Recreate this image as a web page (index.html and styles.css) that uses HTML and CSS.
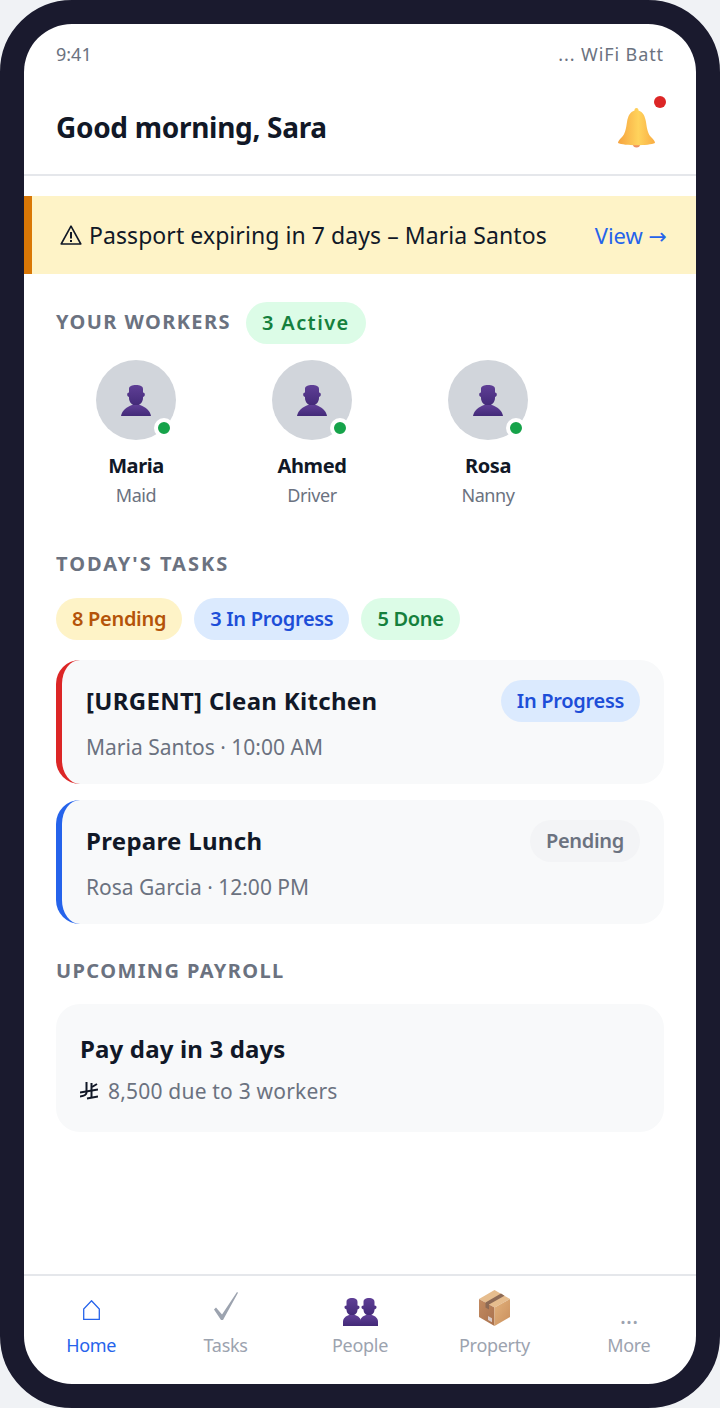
FILE: index.html
```html
<!DOCTYPE html>
<html lang="en">
<head>
    <meta charset="UTF-8">
    <meta name="viewport" content="width=device-width, initial-scale=1.0">
    <title>Home</title>
    <link rel="stylesheet" href="styles.css">
</head>
<body>
    <!-- shared person shapes and gradients for the avatars and the People tab -->
    <svg class="svg-defs" width="0" height="0" aria-hidden="true">
        <defs>
            <linearGradient id="personFill" x1="0" y1="0" x2="0" y2="1">
                <stop offset="0" stop-color="#5f3f96"/>
                <stop offset="1" stop-color="#432a78"/>
            </linearGradient>
            <linearGradient id="bellFill" x1="0" y1="0" x2="1" y2="0">
                <stop offset="0" stop-color="#f6a33f"/>
                <stop offset="0.55" stop-color="#ffd35c"/>
                <stop offset="1" stop-color="#f9ad43"/>
            </linearGradient>
            <linearGradient id="boxRight" x1="0" y1="0" x2="1" y2="1">
                <stop offset="0" stop-color="#e3b27c"/>
                <stop offset="1" stop-color="#c98f5d"/>
            </linearGradient>
            <linearGradient id="boxLeft" x1="0" y1="0" x2="1" y2="1">
                <stop offset="0" stop-color="#c28a60"/>
                <stop offset="1" stop-color="#a9714d"/>
            </linearGradient>
            <symbol id="person" viewBox="0 0 30 31">
                <path fill="url(#personFill)" d="M8 4C8 1 11 0 15 0s7 1 7 4v3.500c1.500 0 1.800 1 1.800 2s-.3 2-1.800 2.500v1c0 4-3 7.500-7 7.500s-7-3.500-7-7.500v-1c-1.500-.5-1.800-1.500-1.800-2.500s.3-2 1.800-2z"/>
                <path fill="url(#personFill)" d="M0 31c1-6 6-9 11-11h8c5 2 10 5 11 11z"/>
            </symbol>
            <symbol id="personTall" viewBox="0 0 18 28">
                <path fill="url(#personFill)" d="M3.500 4C3.500 1 6 0 9 0s5.500 1 5.500 4v3.500c1.500 0 2 .8 2 1.800s-.5 1.800-2 2.200c0 3.500-2.500 6-5.500 6s-5.500-2.500-5.500-6C2 11.100 1.500 10.300 1.500 9.300S2 7.500 3.500 7.500z"/>
                <path fill="url(#personFill)" d="M0 28v-4c0-4 3-6 6-7h6c3 1 6 3 6 7v4z"/>
            </symbol>
        </defs>
    </svg>

    <div class="phone">
        <div class="screen">
            <div class="status-bar">
                <span>9:41</span>
                <span class="status-right">... WiFi Batt</span>
            </div>

            <header class="top-header">
                <h1>Good morning, Sara</h1>
                <div class="bell">
                    <svg width="40" height="40" viewBox="0 0 40 40">
                        <ellipse cx="19.500" cy="36.500" rx="3.500" ry="3" fill="#ee8f62"/>
                        <path fill="url(#bellFill)" d="M19.500 0C21 0 21.500 1 21.500 2.500 26 4 28 8 29 14c1 7 2 12 5 15 2 2 4 4 4 6-6 3-31 3-37 0 0-2 2-4 4-6 3-3 4-8 5-15 1-6 3-10 7.500-11.500C17.500 1 18 0 19.500 0z"/>
                    </svg>
                    <span class="bell-dot"></span>
                </div>
            </header>

            <div class="alert">
                <span class="alert-text">
                    <svg width="22" height="20" viewBox="0 0 22 20" fill="none" stroke="#111827">
                        <path stroke-width="1.600" stroke-linejoin="round" d="M11 1.200 20.800 19H1.200z"/>
                        <path stroke-width="2" d="M11 7v6.500M11 15v2"/>
                    </svg>
                    Passport expiring in 7 days – Maria Santos
                </span>
                <span class="alert-link">View <span class="arrow">→</span></span>
            </div>

            <main class="content">
                <div class="section-row">
                    <h2 class="section-title">YOUR WORKERS</h2>
                    <span class="pill pill-green pill-active">3 Active</span>
                </div>
                <div class="workers">
                    <div class="worker">
                        <div class="avatar">
                            <svg width="30" height="31"><use href="#person"/></svg>
                            <span class="online-dot"></span>
                        </div>
                        <div class="worker-name">Maria</div>
                        <div class="worker-role">Maid</div>
                    </div>
                    <div class="worker">
                        <div class="avatar">
                            <svg width="30" height="31"><use href="#person"/></svg>
                            <span class="online-dot"></span>
                        </div>
                        <div class="worker-name">Ahmed</div>
                        <div class="worker-role">Driver</div>
                    </div>
                    <div class="worker">
                        <div class="avatar">
                            <svg width="30" height="31"><use href="#person"/></svg>
                            <span class="online-dot"></span>
                        </div>
                        <div class="worker-name">Rosa</div>
                        <div class="worker-role">Nanny</div>
                    </div>
                </div>

                <h2 class="section-title tasks-title">TODAY'S TASKS</h2>
                <div class="pills">
                    <span class="pill pill-amber">8 Pending</span>
                    <span class="pill pill-blue">3 In Progress</span>
                    <span class="pill pill-green">5 Done</span>
                </div>

                <div class="task task-urgent">
                    <div class="task-top">
                        <div class="task-title">[URGENT] Clean Kitchen</div>
                        <span class="pill pill-blue">In Progress</span>
                    </div>
                    <div class="task-meta">Maria Santos · 10:00 AM</div>
                </div>
                <div class="task task-normal">
                    <div class="task-top">
                        <div class="task-title">Prepare Lunch</div>
                        <span class="pill pill-gray">Pending</span>
                    </div>
                    <div class="task-meta">Rosa Garcia · 12:00 PM</div>
                </div>

                <h2 class="section-title payroll-title">UPCOMING PAYROLL</h2>
                <div class="payroll">
                    <div class="payroll-heading">Pay day in 3 days</div>
                    <div class="task-meta payroll-meta">
                        <svg class="riyal" width="18" height="18" viewBox="0 0 18 18" fill="none" stroke="#111827" stroke-width="2">
                            <path d="M6.500 0v10.500C6.500 13 4 14 0 14.500"/>
                            <path d="M11.500 1v14.500"/>
                            <path d="M0 10.500 18 7.500M7 16.500 18 14.500M12 5 17 2"/>
                        </svg>
                        8,500 due to 3 workers
                    </div>
                </div>
            </main>

            <nav class="bottom-nav">
                <div class="nav-item active">
                    <span class="nav-icon">
                        <svg class="home-icon" width="17" height="20" viewBox="0 0 17 20" fill="none" stroke="#2563eb" stroke-width="1.300">
                            <path d="M8.500 .8 16.300 9V19.300H.7V9z"/>
                        </svg>
                    </span>
                    <span>Home</span>
                </div>
                <div class="nav-item">
                    <span class="nav-icon">
                        <svg class="check-icon" width="24" height="28" viewBox="0 0 24 28">
                            <path fill="#9ca3af" d="M0 17.500 2 15.500 8 22.500 23 0 24 .7 9 28H7z"/>
                        </svg>
                    </span>
                    <span>Tasks</span>
                </div>
                <div class="nav-item">
                    <span class="nav-icon">
                        <svg class="people-icon" width="35" height="28" viewBox="0 0 35 28">
                            <use href="#personTall" x="0" y="0" width="18" height="28"/>
                            <use href="#personTall" x="17" y="0" width="18" height="28"/>
                        </svg>
                    </span>
                    <span>People</span>
                </div>
                <div class="nav-item">
                    <span class="nav-icon">
                        <svg width="31" height="36" viewBox="0 0 31 36">
                            <path fill="#e6bd8e" d="M15.500 0 31 9l-15.500 8.500L0 9z"/>
                            <path fill="url(#boxLeft)" d="M0 9l15.500 8.500V36L0 27z"/>
                            <path fill="url(#boxRight)" d="M31 9l-15.500 8.500V36L31 27z"/>
                            <path fill="#8d6a55" d="M22 3.500 25.500 5.800 10 14.500V19.500L6.500 17.500V12.500z"/>
                            <path fill="#d9cbc8" d="M9 26l4 2.200v4l-4-2.200z"/>
                        </svg>
                    </span>
                    <span>Property</span>
                </div>
                <div class="nav-item">
                    <span class="nav-icon nav-dots">...</span>
                    <span>More</span>
                </div>
            </nav>
        </div>
    </div>
</body>
</html>
```

FILE: styles.css
```css
* {
    margin: 0;
    padding: 0;
    box-sizing: border-box;
}

body {
    font-family: 'Noto Sans', 'DejaVu Sans', sans-serif;
    background: #f0f2f5;
    width: 720px;
    height: 1408px;
    overflow: hidden;
}

.svg-defs {
    position: absolute;
}

.phone {
    height: 1408px;
    border: 24px solid #1a1a2e;
    border-radius: 72px;
    background: #1a1a2e;
}

.screen {
    height: 1360px;
    background: #fff;
    border-radius: 48px;
    overflow: hidden;
    display: flex;
    flex-direction: column;
}

.status-bar {
    display: flex;
    justify-content: space-between;
    padding: 18px 32px 0;
    height: 52px;
    font-size: 18px;
    color: #6b7280;
}

.status-right {
    letter-spacing: 0.9px;
}

.top-header {
    display: flex;
    justify-content: space-between;
    align-items: center;
    height: 100px;
    padding: 6px 39px 0 32px;
    border-bottom: 2px solid #e5e7eb;
}

.top-header h1 {
    margin-top: -2px;
    font-size: 28px;
    font-weight: 700;
    letter-spacing: -0.3px;
    color: #111827;
}

.bell {
    position: relative;
    width: 40px;
    height: 40px;
}

.bell-dot {
    position: absolute;
    top: -12px;
    right: -9px;
    width: 12px;
    height: 12px;
    border-radius: 50%;
    background: #dc2626;
}

.alert {
    display: flex;
    justify-content: space-between;
    align-items: center;
    height: 78px;
    margin-top: 20px;
    padding: 0 29px 0 28px;
    background: #fef3c7;
    border-left: 8px solid #d97706;
}

.alert-text {
    display: flex;
    align-items: center;
    gap: 7px;
    font-size: 23px;
    letter-spacing: 0.07px;
    color: #111827;
}

.alert-link {
    font-size: 22px;
    color: #2563eb;
}

.arrow {
    font-family: 'DejaVu Sans', sans-serif;
}

.content {
    flex: 1;
    padding: 28px 32px 0;
}

.section-row {
    display: flex;
    align-items: center;
    gap: 15px;
}

.section-row .section-title {
    margin-top: -3px;
}

.section-title {
    font-size: 20px;
    font-weight: 700;
    letter-spacing: 1.4px;
    color: #6b7280;
}

.pill {
    display: inline-block;
    height: 42px;
    line-height: 42px;
    padding: 0 16px;
    border-radius: 21px;
    font-size: 20px;
    font-weight: 600;
    letter-spacing: -0.3px;
    white-space: nowrap;
}

.pill-active {
    letter-spacing: 1.4px;
}

.pill-green {
    background: #dcfce7;
    color: #15803d;
}

.pill-amber {
    background: #fef3c7;
    color: #b45309;
}

.pill-blue {
    background: #dbeafe;
    color: #1d4ed8;
}

.pill-gray {
    background: #f3f4f6;
    color: #6b7280;
}

.workers {
    display: flex;
    gap: 16px;
    margin-top: 16px;
}

.worker {
    width: 160px;
    text-align: center;
}

.avatar {
    position: relative;
    display: flex;
    align-items: center;
    justify-content: center;
    width: 80px;
    height: 80px;
    margin: 0 auto;
    border-radius: 50%;
    background: #d1d5db;
}

.online-dot {
    position: absolute;
    right: 2px;
    bottom: 2px;
    width: 20px;
    height: 20px;
    border: 4px solid #fff;
    border-radius: 50%;
    background: #16a34a;
}

.worker-name {
    margin-top: 12px;
    font-size: 20px;
    font-weight: 700;
    letter-spacing: -0.4px;
    color: #111827;
}

.worker-role {
    margin-top: 4px;
    font-size: 18px;
    letter-spacing: -0.4px;
    color: #6b7280;
}

.tasks-title {
    margin-top: 43px;
    letter-spacing: 2px;
}

.pills {
    display: flex;
    gap: 12px;
    margin-top: 21px;
}

.task {
    margin-top: 20px;
    padding: 20px 24px;
    height: 124px;
    background: #f8f9fa;
    border-left: 6px solid #2563eb;
    border-radius: 24px;
}

.task + .task {
    margin-top: 16px;
}

.task-urgent {
    border-left-color: #dc2626;
}

.task-top {
    display: flex;
    justify-content: space-between;
    align-items: center;
}

.task-title {
    margin-top: -2px;
    font-size: 24px;
    font-weight: 700;
    letter-spacing: 0.3px;
    color: #111827;
}

.task-meta {
    margin-top: 11px;
    font-size: 21px;
    color: #6b7280;
}

.payroll-title {
    margin-top: 33px;
}

.payroll {
    margin-top: 20px;
    height: 128px;
    padding: 28px 24px 0;
    background: #f8f9fa;
    border-radius: 24px;
}

.payroll-heading {
    font-size: 24px;
    font-weight: 700;
    letter-spacing: 0.15px;
    color: #111827;
}

.payroll-meta {
    display: flex;
    align-items: center;
    gap: 10px;
    margin-top: 12px;
    letter-spacing: 0.2px;
}

.bottom-nav {
    display: flex;
    height: 110px;
    border-top: 2px solid #e5e7eb;
}

.nav-item {
    flex: 1;
    display: flex;
    flex-direction: column;
    align-items: center;
    gap: 3px;
    padding-top: 10px;
    font-size: 18px;
    letter-spacing: -0.3px;
    color: #9ca3af;
}

.nav-item.active {
    color: #2563eb;
}

.nav-icon {
    display: flex;
    align-items: center;
    justify-content: center;
    height: 44px;
}

.home-icon {
    margin-top: 4px;
}

.check-icon {
    margin-top: -4px;
}

.people-icon {
    margin-top: 8px;
}

.nav-dots {
    font-size: 24px;
    padding-top: 12px;
}
```
